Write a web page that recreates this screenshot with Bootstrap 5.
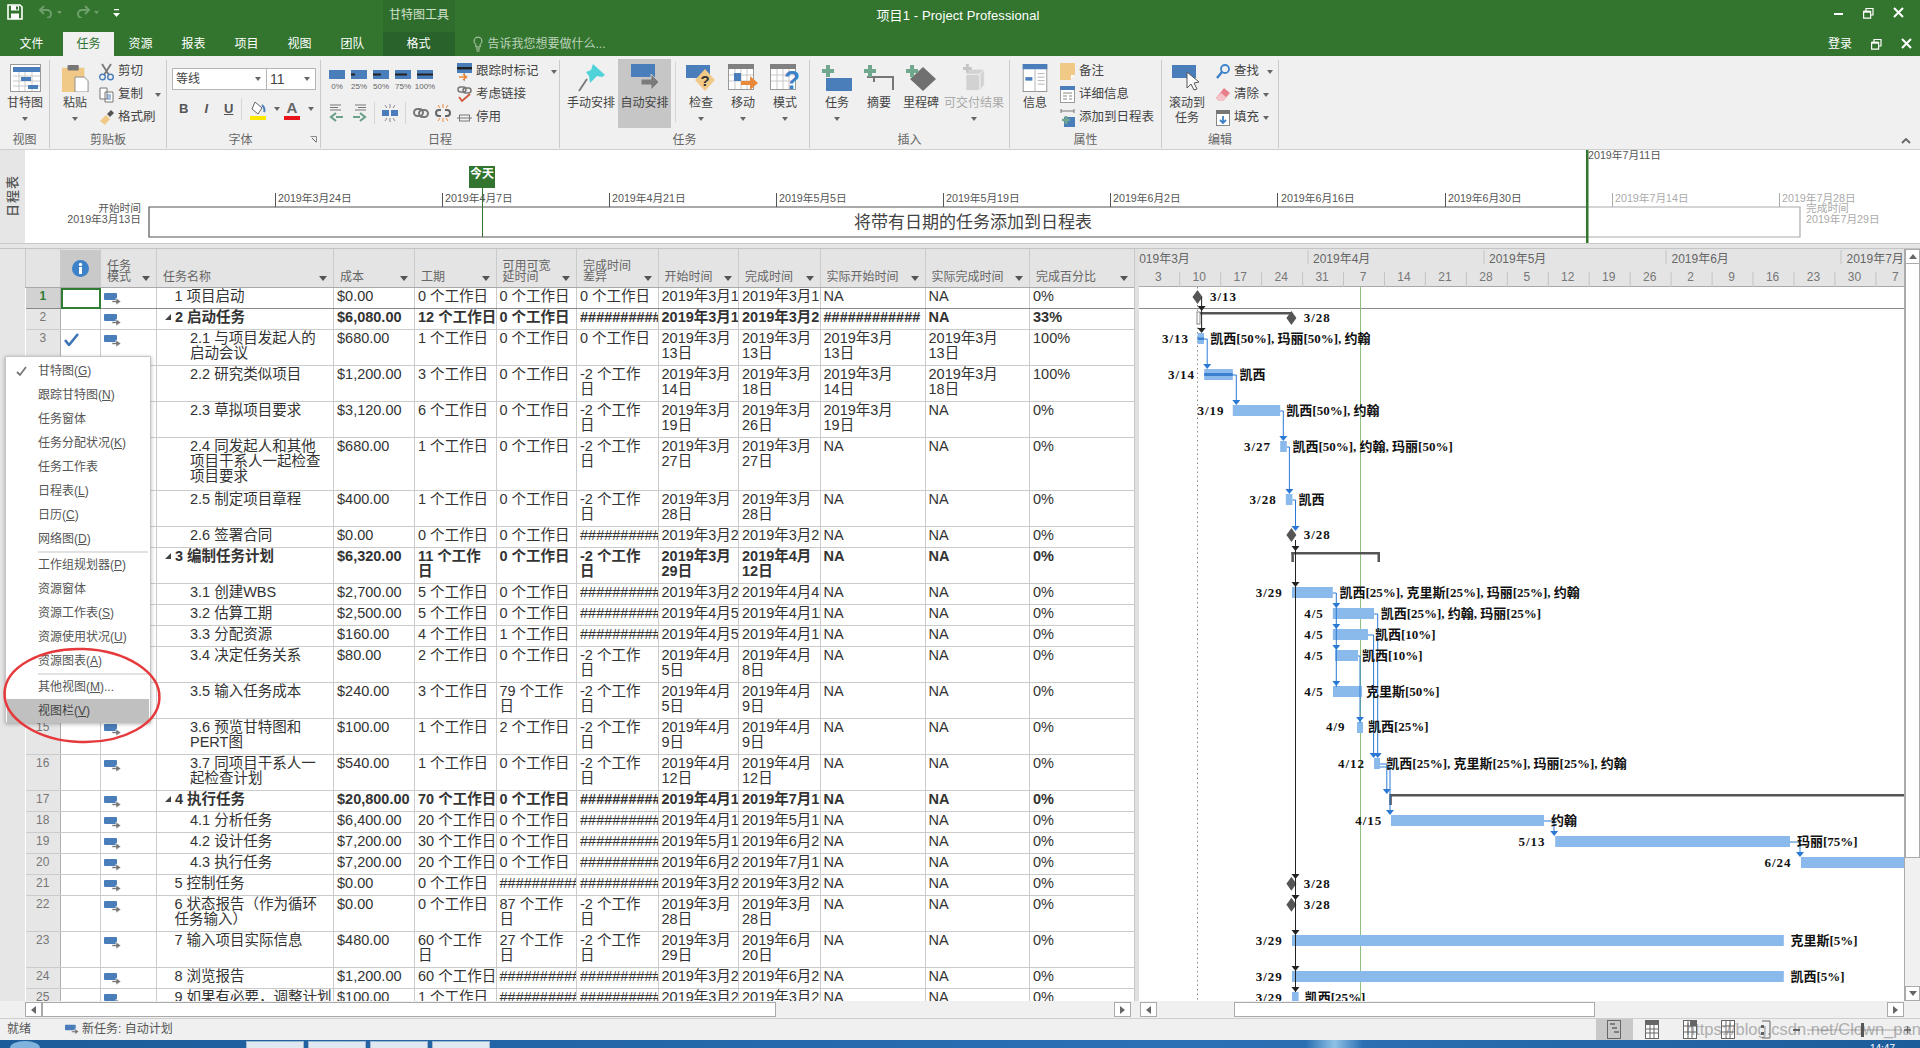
<!DOCTYPE html>
<html lang="zh-CN">
<head>
<meta charset="utf-8">
<title>项目1 - Project Professional</title>
<link href="https://cdn.jsdelivr.net/npm/bootstrap@5.3.0/dist/css/bootstrap.min.css" rel="stylesheet">
<style>
html,body{height:1048px;overflow:hidden}
body{position:relative;width:1920px;background:#e6e6e6;font-family:"Liberation Sans","Noto Sans CJK SC",sans-serif;font-size:12px;color:#444}
svg{display:block;flex:none}
/* title */
.ttl{height:56px;background:#33752f;color:#fff}
.ttl-top{height:32px}
.ttl-bot{height:24px}
.qat{width:383px;padding:4px 0 0 7px;gap:14px}
.ctx-a{width:72px;background:#2f6d2c;color:#cfe0cd;text-align:center;line-height:30px}
.ctx-b{width:72px;background:#29622a;text-align:center;line-height:24px}
.ttl-name{width:1006px;text-align:center;font-size:13px;line-height:32px;letter-spacing:.1px}
.wctl{margin-left:auto;width:86px;padding-top:7px;gap:19px}
.rtab.nav-link{width:53px;padding:0;text-align:center;color:#fff;line-height:24px;font-size:12px}
.rtab.first{width:63px}
.rtab.wide{width:51px}
.rtab.active{background:#f0f0f0;color:#2f7330}
.rtab-gap{width:3.5px}
.tell{padding-left:18px;gap:5px;color:#bcd2ba;line-height:24px}
.acct{margin-left:auto;width:92px;gap:19px;line-height:24px;align-items:center}
/* ribbon */
.rbn{height:94px;background:#f0f0f0;border-bottom:1px solid #cfcfcf;padding-top:4px;position:relative}
.grp{height:88px;border-right:1px solid #cbcbcb;display:flex;flex-direction:column;flex:none;position:relative}
.g1{width:50px}.g2{width:117px}.g3{width:154px}.g4{width:239px}.g5{width:250px}.g6{width:200px}.g7{width:152px}.g8{width:117px}
.gb{height:72px;display:flex;flex:none}
.gl-t{line-height:16px;text-align:center;color:#666}
.big{display:flex;flex-direction:column;align-items:center;padding-top:4px;flex:none;white-space:nowrap;line-height:15px}
.big svg{margin-bottom:4px;height:28px}
.big.dim{color:#aaa}
.w42{width:42px}.w50{width:50px}.w53{width:53px}.w64{width:64px}
.ml2{margin-left:2px}.ml6{margin-left:6px}
.on{background:#c6c6c6;height:69px;margin-top:-1px;padding-top:5px}
.car{width:0;height:0;border:3px solid transparent;border-top:4px solid #666;border-bottom:0;display:inline-block;flex:none}
.big .car{margin-top:6px}
.stk{display:flex;flex-direction:column;flex:none}
.itm{height:23px;display:flex;align-items:center;gap:4px;white-space:nowrap;font-size:12.5px}
.ml-g2{margin-left:-1px}
.sep-v{width:1px;background:#d6d6d6;margin:2px 4px 10px 4px;flex:none}
.combo{height:22px;background:#fff;border:1px solid #b5b5b5;display:flex;align-items:center;justify-content:space-between;padding:0 5px 0 3px;font-size:12px}
.cf{width:95px;margin-left:5px}.cs{width:50px;margin-left:-1px}
.nsz{font-size:14px;line-height:1}
.fb{font-weight:700;font-family:"Liberation Sans",sans-serif;font-size:13px;color:#555}
.fsep{width:1px;height:22px;background:#d6d6d6;flex:none}
.ml4n{margin-left:-4px}
.dlg{margin-left:auto;margin-right:3px}
.clps{margin-left:auto;margin-right:9px;margin-top:78px}
.sch{width:131px}
.pr-row{padding:10px 0 0 8px;gap:6px}
.pr{width:16px;align-items:center}
.pr-l{font-size:8px;line-height:8px;color:#666;white-space:nowrap}
.sc-row2{padding-left:8px;margin-top:11px;align-items:center}
.m6{margin-left:6px}.m7{margin-left:7px}
.fsep2{width:1px;height:22px;background:#d6d6d6;flex:none;margin-left:7px}
.sch-s{padding-left:5px}
/* timeline */
.tln{height:94px;background:#fff;border-bottom:1px solid #c9c9c9}
.vstrip{width:25px;background:#e6e6e6;display:flex;align-items:center;justify-content:center}
.vstrip span{writing-mode:vertical-rl;text-orientation:sideways;transform:rotate(180deg);font-size:13px;letter-spacing:1px;color:#555;font-weight:500}
.tt{font-size:10.7px;fill:#555}.tg{font-size:10.7px;fill:#aaa}
.band{height:5px;background:#e6e6e6;border-bottom:1px solid #c4c4c4}
/* main */
.mainp{height:752px}
.side{width:25px;background:#e6e6e6;flex:none}
.gridp{width:1109px;height:752px;overflow:hidden;background:#fff;flex:none}
.split{width:5px;background:#e0e0e0;border-left:1px solid #c8c8c8;flex:none}
.ganttp{width:765px;height:752px;background:#fff;overflow:hidden;flex:none}
.vsb{width:16px;background:#f0f0f0;border-left:1px solid #aaa;flex:none;flex-direction:column}
.sb-btn{height:15px;background:#fff;border:1px solid #aaa;display:flex;align-items:center;justify-content:center;flex:none}
.vth{height:594px;background:#fff;border:1px solid #aaa;border-top:0;flex:none}
.up{width:0;height:0;border:4px solid transparent;border-bottom:5px solid #666;border-top:0}
.dn{width:0;height:0;border:4px solid transparent;border-top:5px solid #666;border-bottom:0}
.lf{width:0;height:0;border:4px solid transparent;border-right:5px solid #666;border-left:0}
.rt{width:0;height:0;border:4px solid transparent;border-left:5px solid #666;border-right:0}
table.tg-t{table-layout:fixed;width:1109px;border-collapse:collapse;font-size:14.5px;color:#333}
.table.tg-t{margin:0}
.table.tg-t>:not(caption)>*>*{padding:1px 3px 0;border:1px solid #cbcbcb;line-height:15px;vertical-align:top;white-space:nowrap;overflow:hidden;color:#333;box-shadow:none}
.table.tg-t>thead>tr>th{height:38px;background:#e4e4e4;font-size:12px;font-weight:400;color:#666;line-height:11.7px;padding:0 6px 3px;vertical-align:bottom;border-top:0;border-bottom:1px solid #a9a9a9;white-space:normal}
.table.tg-t>thead>tr>th.hi{background:#c9c9c9;padding:0;vertical-align:middle}
.hd{display:flex;align-items:flex-end;justify-content:space-between}
.hd .car{border-width:4px;border-top-width:5px;border-bottom-width:0;margin-bottom:3px;border-top-color:#555}
.c0{width:35px}.c1{width:40px}.c2{width:56px}.c3{width:177px}.c4{width:81px}.c5{width:81.5px}.c6{width:80.5px}.c7{width:81.5px}.c8{width:80.5px}.c9{width:81.5px}.c10{width:105px}.c11{width:104.5px}.c12{width:105px}
.rh1 td{height:21px}.rh2 td{height:36px}.rh3 td{height:53px}
.table.tg-t td.rid{background:#e6e6e6;text-align:center;font-size:12px;color:#777;border-left:0;border-right:1px solid #b0b0b0}
.table.tg-t td.sel-id{background:#d2d2d2;color:#2e7d32;font-weight:700;border-bottom-color:#8a8a8a}
.table.tg-t td.sel{outline:2px solid #2e7d32;outline-offset:-2px}
.table.tg-t td.mo{padding:5px 0 0 3px}
.table.tg-t td.ck{padding:3px 0 0 3px}
.dark-b td{border-bottom-color:#8a8a8a!important}
.table.tg-t td.n0{padding-left:17.5px}
.table.tg-t td.n1{padding-left:33px}
.table.tg-t td.nt{padding-left:8px}
.fold{display:inline-block;width:0;height:0;border-style:solid;border-width:0 0 6px 6px;border-color:transparent transparent #444 transparent;margin-right:4px;vertical-align:2px}
.bld td{font-weight:700}
.gb-t{font:700 13px "Liberation Serif","Noto Sans CJK SC",serif;fill:#111}
.gd{letter-spacing:1px}
.gm{font-size:12px;fill:#666}.gw{font-size:12px;fill:#777;text-anchor:middle}
/* scrollbars */
.hsb{height:17px;background:#f0f0f0;padding-top:1px}
.hs-l{width:25px;flex:none}
.hs-btn{width:17px;height:15px;background:#fff;border:1px solid #aaa;display:flex;align-items:center;justify-content:center;flex:none}
.hs-th{height:15px;background:#fff;border:1px solid #aaa;flex:none}
.t1{width:734px}.t2{width:361px;margin-left:77px}
.hs-sp{flex:none}
.s1{width:338px}.s2{width:292px}.s3{width:9px}
/* status */
.stb{height:22px;background:#f0f0f0;border-top:1px solid #cfcfcf;color:#555;position:relative}
.stb-a{padding-left:7px;width:65px;line-height:21px}
.stb-b{gap:3px;line-height:21px;align-items:center}
.stb-r{margin-left:auto;align-items:center;height:21px;width:324.5px;flex:none}
.vb-on{width:37px;height:21px;background:#c8c8c8;display:flex;align-items:center;justify-content:center;flex:none}
.vb{width:38px;display:flex;align-items:center;justify-content:center;flex:none}
.wm{position:absolute;left:1686px;top:0;font-size:16.5px;line-height:21px;color:#555;opacity:.42;white-space:nowrap}
/* taskbar */
.tbar{height:8px;background:linear-gradient(90deg,#1d5c9a,#2a70b5 60%,#2a6fb2 68%,#8fc1e6 69.5%,#2a6fb2 71%,#1d5c9a);position:relative;overflow:hidden}
.orb{width:30px;height:14px;border-radius:50%;background:#7fb2dc;margin:1px 0 0 10px;flex:none}
.tbtn{width:58px;height:8px;background:#dfe9f2;border:1px solid #9fb8cf;border-bottom:0;flex:none;margin-top:1px}
.tb-g{margin-left:206px;gap:4px}
.clk{margin-left:auto;color:#fff;margin-right:25px;margin-top:3px;line-height:12px;font-size:10px}
/* view menu */
.dropdown-menu.vmenu{position:absolute;left:5px;top:356px;width:146px;min-width:0;height:367px;padding:2px 0 0;border:1px solid #c6c6c6;border-radius:0;background:#fff;box-shadow:0 1px 4px rgba(0,0,0,.3);margin:0;z-index:5;--bs-dropdown-link-color:#555}
.vmenu .dropdown-item{height:24px;padding:0 0 0 32px;font-size:12px;line-height:24px;color:#555;display:flex;align-items:center;width:144px}
.vmenu .dropdown-item.chk{padding-left:9px}
.vmenu .dropdown-item.chk svg{margin-right:10px}
.vmenu .dropdown-item.hot{background:#c0c0c0;color:#444;margin-left:1px;width:142px;padding-left:31px}
.vmenu .dropdown-divider{margin:0 2px 0 32px;height:2px;border:0;background:#e2e2e2;opacity:1}
.ring{position:absolute;left:0;top:645px;z-index:6}
</style>
</head>
<body class="d-flex flex-column">
<svg width="0" height="0" class="position-absolute">
<defs>
<symbol id="auto" viewBox="0 0 17 12"><rect x="0" y="0" width="13" height="7" rx="1" fill="#4a7ebb"/><path d="M8 7.5h4V5l5 3.5-5 3.500V9.500H8z" fill="#777" stroke="#fff" stroke-width=".6"/></symbol>
<path id="ah" d="M-4 0h8l-4 5z"/>
<path id="dm" d="M0-7 5 0 0 7-5 0z"/>
</defs>
</svg>

<header class="ttl flex-none">
  <div class="ttl-top d-flex">
    <div class="qat d-flex">
      <svg width="16" height="16" viewBox="0 0 16 16"><path d="M1 1h12l2 2v12H1z" fill="none" stroke="#fff" stroke-width="1.600"/><path d="M4 1.500h8v5H4zM4 9.500h8V15H4z" fill="#fff"/><rect x="9" y="2.500" width="2" height="3" fill="#33752f"/></svg>
      <svg width="24" height="14" viewBox="0 0 24 14"><path d="M7 2 3 6l4 4M3 6h7a4 4 0 0 1 0 8" fill="none" stroke="#6f9f6c" stroke-width="2"/><path d="M20 7h5l-2.500 3z" fill="#6f9f6c"/></svg>
      <svg width="24" height="14" viewBox="0 0 24 14"><path d="M10 2l4 4-4 4M14 6H7a4 4 0 0 0 0 8" fill="none" stroke="#6f9f6c" stroke-width="2"/><path d="M19 7h5l-2.500 3z" fill="#6f9f6c"/></svg>
      <svg width="7" height="10" viewBox="0 0 7 10" class="mt-1"><path d="M1 1h5v1.200H1zM0 5h7L3.500 9z" fill="#fff"/></svg>
    </div>
    <div class="ctx-a">甘特图工具</div>
    <div class="ttl-name">项目1 - Project Professional</div>
    <div class="wctl d-flex">
      <svg width="10" height="12" viewBox="0 0 10 12"><rect y="6" width="9" height="2" fill="#fff"/></svg>
      <svg width="11" height="12" viewBox="0 0 11 12"><path d="M.6 4.600h7v6.500h-7zM3 4V1.500h7V8H8" fill="none" stroke="#fff" stroke-width="1.200"/><path d="M.6 4.600h7" stroke="#fff" stroke-width="2"/></svg>
      <svg width="11" height="12" viewBox="0 0 11 12"><path d="M1 1l9 9M10 1l-9 9" stroke="#fff" stroke-width="2"/></svg>
    </div>
  </div>
  <div class="ttl-bot d-flex">
    <ul class="nav flex-nowrap">
      <li class="nav-item"><a class="nav-link rtab first" href="#">文件</a></li>
      <li class="nav-item"><a class="nav-link rtab wide active" href="#">任务</a></li>
      <li class="nav-item"><a class="nav-link rtab" href="#">资源</a></li>
      <li class="nav-item"><a class="nav-link rtab" href="#">报表</a></li>
      <li class="nav-item"><a class="nav-link rtab" href="#">项目</a></li>
      <li class="nav-item"><a class="nav-link rtab" href="#">视图</a></li>
      <li class="nav-item"><a class="nav-link rtab" href="#">团队</a></li>
    </ul>
    <div class="rtab-gap"></div>
    <div class="ctx-b">格式</div>
    <div class="tell d-flex align-items-center">
      <svg width="10" height="16" viewBox="0 0 10 16"><path d="M5 1a4 4 0 0 0-2.200 7.300V11h4.400V8.300A4 4 0 0 0 5 1zM3 13h4M3.500 15h3" fill="none" stroke="#bcd2ba" stroke-width="1"/></svg>
      <span>告诉我您想要做什么...</span>
    </div>
    <div class="acct d-flex">
      <span>登录</span>
      <svg width="11" height="12" viewBox="0 0 11 12"><path d="M.6 4.600h7v6.500h-7zM3 4V1.500h7V8H8" fill="none" stroke="#fff" stroke-width="1.200"/><path d="M.6 4.600h7" stroke="#fff" stroke-width="2"/></svg>
      <svg width="11" height="12" viewBox="0 0 11 12"><path d="M1 1l9 9M10 1l-9 9" stroke="#fff" stroke-width="2"/></svg>
    </div>
  </div>
</header>

<section class="rbn d-flex">
  <div class="grp g1"><div class="gb">
    <div class="big w50"><svg width="31" height="28" viewBox="0 0 31 28"><rect x=".5" y=".5" width="30" height="27" fill="#fff" stroke="#999"/><rect x="3" y="3" width="27" height="5" fill="#4a7ebb"/><path d="M9 8v19M3 12h27M3 17h27M3 22h27M15 8v19M22 8v19" stroke="#c9c9c9"/><rect x="11" y="13" width="10" height="4" fill="#4a7ebb"/><rect x="18" y="21" width="10" height="4" fill="#4a7ebb"/></svg><span>甘特图</span><i class="car"></i></div>
  </div><div class="gl-t">视图</div></div>

  <div class="grp g2"><div class="gb">
    <div class="big w50"><svg width="30" height="30" viewBox="0 0 30 30"><rect x="1" y="4" width="24" height="26" fill="#f1c987"/><rect x="7" y="1" width="12" height="6" rx="1" fill="#777"/><path d="M15 14h10l4 4v12H15z" fill="#fff" stroke="#888"/></svg><span>粘贴</span><i class="car"></i></div>
    <div class="stk ml-g2">
      <div class="itm"><svg width="15" height="18" viewBox="0 0 15 18"><path d="M3 1l7 11M12 1L5 12" stroke="#777" stroke-width="1.800"/><circle cx="3.500" cy="14" r="2.800" fill="none" stroke="#4a7ebb" stroke-width="1.400"/><circle cx="11.500" cy="14" r="2.800" fill="none" stroke="#4a7ebb" stroke-width="1.400"/></svg><span>剪切</span></div>
      <div class="itm"><svg width="15" height="16" viewBox="0 0 15 16"><path d="M1 1h7l0 11H1zM6 5h8v10H6z" fill="#fff" stroke="#777"/><path d="M8 8h4M8 10h4M8 12h4" stroke="#4a7ebb"/></svg><span>复制</span><i class="car ms-2"></i></div>
      <div class="itm"><svg width="15" height="17" viewBox="0 0 15 17"><path d="M1 12l6-6 4 4-5 6z" fill="#f1c987"/><path d="M8 5l4-4 3 3-4 4z" fill="#555"/></svg><span>格式刷</span></div>
    </div>
  </div><div class="gl-t">剪贴板</div></div>

  <div class="grp g3"><div class="gb flex-column">
    <div class="d-flex pt-1 mt-1"><div class="combo cf"><span>等线</span><i class="car"></i></div><div class="combo cs"><span class="nsz">11</span><i class="car"></i></div></div>
    <div class="d-flex align-items-center mt-2 ps-2 gap-2">
      <span class="fb ms-1">B</span><em class="fb ms-2">I</em><u class="fb ms-2">U</u>
      <span class="fsep"></span>
      <svg width="16" height="21" viewBox="0 0 16 21"><path d="M5 3l7 6-4 6-6-5z" fill="#fff" stroke="#666"/><path d="M12 6c2 2 3 5 2 7" stroke="#4a7ebb" stroke-width="2" fill="none"/><rect y="17" width="16" height="4" fill="#ffe800"/></svg><i class="car"></i>
      <svg class="ml4n" width="16" height="21" viewBox="0 0 16 21"><text x="8" y="14" text-anchor="middle" font-size="15" font-weight="700" fill="#666" font-family="Liberation Sans">A</text><rect y="17" width="16" height="4" fill="#e8141c"/></svg><i class="car"></i>
    </div>
  </div><div class="d-flex"><div class="gl-t flex-grow-1 ps-1">字体</div><svg class="dlg mt-1" width="7" height="7" viewBox="0 0 7 7"><path d="M.5.5h6v6" fill="none" stroke="#888"/><path d="M2 2l4 4" stroke="#666"/></svg></div></div>

  <div class="grp g4"><div class="gb">
    <div class="d-flex flex-column sch">
      <div class="d-flex pr-row">
        <div class="stk pr"><svg width="16" height="9" viewBox="0 0 16 9"><rect width="16" height="9" fill="#4a7ebb"/></svg><span class="pr-l mt-1">0%</span></div>
        <div class="stk pr"><svg width="16" height="9" viewBox="0 0 16 9"><rect width="16" height="9" fill="#4a7ebb"/><rect y="3.500" width="4" height="2" fill="#222"/></svg><span class="pr-l mt-1">25%</span></div>
        <div class="stk pr"><svg width="16" height="9" viewBox="0 0 16 9"><rect width="16" height="9" fill="#4a7ebb"/><rect y="3.500" width="8" height="2" fill="#222"/></svg><span class="pr-l mt-1">50%</span></div>
        <div class="stk pr"><svg width="16" height="9" viewBox="0 0 16 9"><rect width="16" height="9" fill="#4a7ebb"/><rect y="3.500" width="12" height="2" fill="#222"/></svg><span class="pr-l mt-1">75%</span></div>
        <div class="stk pr"><svg width="16" height="9" viewBox="0 0 16 9"><rect width="16" height="9" fill="#4a7ebb"/><rect y="3.500" width="16" height="2" fill="#222"/></svg><span class="pr-l mt-1">100%</span></div>
      </div>
      <div class="d-flex sc-row2">
        <svg width="16" height="18" viewBox="0 0 16 18"><path d="M1 1h11M1 3.500h8M1 6h11" stroke="#777"/><path d="M7 13H14M7 9l-5 4 5 4" fill="none" stroke="#69a088" stroke-width="2.200"/></svg>
        <svg class="m6" width="16" height="18" viewBox="0 0 16 18"><path d="M4 1h11M7 3.500h8M4 6h11" stroke="#777"/><path d="M9 13H2M9 9l5 4-5 4" fill="none" stroke="#69a088" stroke-width="2.200"/></svg>
        <span class="fsep2"></span>
        <svg class="m7" width="16" height="18" viewBox="0 0 16 18"><rect y="6" width="7" height="6" fill="#4a7ebb"/><rect x="9" y="6" width="7" height="6" fill="#4a7ebb"/><path d="M8 0v4M8 14v4M3 1l2 3M13 1l-2 3M3 17l2-3M13 17l-2-3" stroke="#888"/></svg>
        <span class="fsep2"></span>
        <svg class="m7" width="16" height="12" viewBox="0 0 16 12"><rect x="1" y="2" width="9" height="7" rx="3.500" fill="none" stroke="#777" stroke-width="2"/><rect x="6" y="3" width="9" height="7" rx="3.500" fill="none" stroke="#777" stroke-width="2"/></svg>
        <svg class="m6" width="16" height="18" viewBox="0 0 16 18"><path d="M6 6H4a3 3 0 0 0 0 6h2M10 6h2a3 3 0 0 1 0 6h-2" fill="none" stroke="#666" stroke-width="2"/><path d="M8 0v4M8 14v4M3 1l2 3M13 1l-2 3M3 17l2-3M13 17l-2-3" stroke="#e8893a"/></svg>
      </div>
    </div>
    <div class="stk sch-s">
      <div class="itm"><svg width="15" height="18" viewBox="0 0 15 18"><rect width="15" height="10" fill="#4a7ebb"/><rect y="4" width="15" height="2.400" fill="#222"/><path d="M7.500 10v8" stroke="#999"/><path d="M2 14h7M6 11l3.500 3L6 17" fill="none" stroke="#e8893a" stroke-width="1.600"/></svg><span>跟踪时标记</span><i class="car ms-2"></i></div>
      <div class="itm"><svg width="15" height="17" viewBox="0 0 15 17"><rect x="1" y="1" width="8" height="5" rx="2.500" fill="none" stroke="#777" stroke-width="1.500"/><rect x="6" y="2" width="8" height="5" rx="2.500" fill="none" stroke="#777" stroke-width="1.500"/><path d="M2 11l3 4 8-7" fill="none" stroke="#d2553a" stroke-width="1.800"/></svg><span>考虑链接</span></div>
      <div class="itm"><svg width="15" height="10" viewBox="0 0 15 10"><path d="M0 5h15" stroke="#777"/><rect x="2.500" y="2" width="10" height="6" fill="none" stroke="#777"/></svg><span>停用</span></div>
    </div>
  </div><div class="gl-t">日程</div></div>

  <div class="grp g5"><div class="gb">
    <div class="big w50 ml6"><svg width="28" height="28" viewBox="0 0 28 28"><path d="M16 0l12 11-3 2-5-1-7 7-1-7-3-4 5-2z" fill="#4fd3d8"/><path d="M10 15L2 27" stroke="#777" stroke-width="1.800"/></svg><span>手动安排</span></div>
    <div class="big w53 on ml2"><svg width="28" height="28" viewBox="0 0 28 28"><rect width="24" height="13" fill="#4a7ebb"/><path d="M10 15h10v-5l8 8-8 8v-5H10z" fill="#7b7b7b" stroke="#c6c6c6"/></svg><span>自动安排</span></div>
    <span class="sep-v"></span>
    <div class="big w42"><svg width="30" height="28" viewBox="0 0 30 28"><rect x="0" y="1" width="24" height="13" fill="#4a7ebb"/><path d="M19 5l10 11-10 11-10-11z" fill="#f1c987"/><text x="19" y="22" text-anchor="middle" font-size="15" font-weight="700" fill="#333" font-family="Liberation Sans">?</text></svg><span>检查</span><i class="car"></i></div>
    <div class="big w42"><svg width="30" height="28" viewBox="0 0 30 28"><rect x=".5" y=".5" width="25" height="25" fill="#fff" stroke="#999"/><rect y="0" width="26" height="5" fill="#808080"/><path d="M7 5v20M13 5v20M19 5v20M1 11h24M1 17h24" stroke="#c9c9c9"/><rect x="6" y="9" width="7" height="8" fill="#4a7ebb"/><path d="M13 17h9v-5l8 7-8 7v-5h-9z" fill="#e8893a"/></svg><span>移动</span><i class="car"></i></div>
    <div class="big w42"><svg width="30" height="28" viewBox="0 0 30 28"><rect x=".5" y=".5" width="25" height="25" fill="#fff" stroke="#999"/><rect y="0" width="26" height="5" fill="#808080"/><path d="M7 5v20M13 5v20M19 5v20M1 11h24M1 17h24" stroke="#c9c9c9"/><text x="22" y="25" text-anchor="middle" font-size="26" font-weight="700" fill="#3d82c8" font-family="Liberation Sans">?</text></svg><span>模式</span><i class="car"></i></div>
  </div><div class="gl-t">任务</div></div>

  <div class="grp g6"><div class="gb">
    <div class="big w42 ml6"><svg width="30" height="28" viewBox="0 0 30 28"><path d="M4 14h26v13H4z" fill="#4a7ebb"/><path d="M0 7h12M6 1v12" stroke="#6fa78f" stroke-width="4"/></svg><span>任务</span><i class="car"></i></div>
    <div class="big w42"><svg width="30" height="28" viewBox="0 0 30 28"><path d="M3 13h26v13" fill="none" stroke="#777" stroke-width="2"/><path d="M10 13v5" stroke="#777" stroke-width="2"/><path d="M0 7h12M6 1v12" stroke="#6fa78f" stroke-width="4"/></svg><span>摘要</span></div>
    <div class="big w42"><svg width="30" height="28" viewBox="0 0 30 28"><path d="M17 3l13 12-13 12L4 15z" fill="#707070"/><path d="M0 7h12M6 1v12" stroke="#6fa78f" stroke-width="4"/></svg><span>里程碑</span></div>
    <div class="big dim w64"><svg width="30" height="28" viewBox="0 0 30 38"><path d="M4 14h19v22H4zM23 14l6-7v21l-6 8zM4 14l6-7h19l-6 7z" fill="#d2d2d2" stroke="#f0f0f0"/><path d="M0 6h12M6 0v12" stroke="#c5c5c5" stroke-width="4"/></svg><span>可交付结果</span><i class="car"></i></div>
  </div><div class="gl-t">插入</div></div>

  <div class="grp g7"><div class="gb">
    <div class="big w50"><svg width="28" height="32" viewBox="0 0 28 32"><rect x=".5" y=".5" width="27" height="31" fill="#fff" stroke="#888"/><rect width="28" height="6" fill="#4a7ebb"/><rect x="3" y="15" width="8" height="4" fill="#4a7ebb"/><path d="M14 6v26M17 11h8M17 15h8M17 19h8M17 23h8" stroke="#aaa"/></svg><span>信息</span></div>
    <div class="stk">
      <div class="itm"><svg width="15" height="17" viewBox="0 0 15 17"><path d="M0 0h15v12l-4 5H0z" fill="#f1c987"/><path d="M11 17v-5h4" fill="#fff"/></svg><span>备注</span></div>
      <div class="itm"><svg width="15" height="17" viewBox="0 0 15 17"><rect x=".5" y=".5" width="14" height="16" fill="#fff" stroke="#999"/><rect width="15" height="4" fill="#4a7ebb"/><path d="M3 7h9M3 10h4M9 10h3M3 13h4M9 13h3" stroke="#888"/></svg><span>详细信息</span></div>
      <div class="itm"><svg width="15" height="18" viewBox="0 0 15 18"><path d="M1 2h13M1 0v4M14 0v4" stroke="#777"/><rect x="4" y="8" width="11" height="10" fill="#4a7ebb"/><path d="M2 11h8M6 7v8" stroke="#6fa78f" stroke-width="2.600"/></svg><span>添加到日程表</span></div>
    </div>
  </div><div class="gl-t">属性</div></div>

  <div class="grp g8"><div class="gb">
    <div class="big w50"><svg width="30" height="28" viewBox="0 0 30 28"><rect y="1" width="24" height="13" fill="#4a7ebb"/><path d="M15 8v16l4-4 3 6 3-1-3-6 5-1z" fill="#fff" stroke="#555"/></svg><span>滚动到</span><span>任务</span></div>
    <div class="stk ms-1">
      <div class="itm"><svg width="14" height="15" viewBox="0 0 14 15"><circle cx="9" cy="5" r="4" fill="none" stroke="#3d82c8" stroke-width="1.800"/><path d="M6 8l-5 6" stroke="#3d82c8" stroke-width="2.400"/></svg><span>查找</span><i class="car ms-1"></i></div>
      <div class="itm"><svg width="14" height="15" viewBox="0 0 14 15"><path d="M8 1l6 5-7 8H3L0 11z" fill="#e8808c"/><path d="M0 11l3 3h4l3-4-5-4z" fill="#f5c4c8"/></svg><span>清除</span><i class="car"></i></div>
      <div class="itm"><svg width="14" height="16" viewBox="0 0 14 16"><rect x=".5" y=".5" width="13" height="15" fill="#fff" stroke="#888"/><rect width="14" height="4" fill="#777"/><path d="M7 6v7M4 10l3 3 3-3" fill="none" stroke="#3d82c8" stroke-width="1.800"/></svg><span>填充</span><i class="car"></i></div>
    </div>
  </div><div class="gl-t">编辑</div></div>
  <svg class="clps" width="10" height="6" viewBox="0 0 10 6"><path d="M1 5l4-4 4 4" fill="none" stroke="#666" stroke-width="1.800"/></svg>
</section>

<section class="tln d-flex">
  <div class="vstrip"><span>日程表</span></div>
  <svg width="1895" height="93" viewBox="25 150 1895 93">
    <path d="M1587 207H149v30h1438" fill="none" stroke="#555" stroke-width="1.200"/>
    <path d="M1587 207h213v30h-213" fill="none" stroke="#aaa" stroke-width="1.200"/>
    <path d="M275.500 193v14M442.500 193v14M609.500 193v14M776.500 193v14M943.500 193v14M1110.500 193v14M1277.500 193v14M1445.500 193v14" stroke="#555"/>
    <path d="M1612.500 193v14M1779.500 193v14" stroke="#aaa"/>
    <text class="tt" x="278" y="202">2019年3月24日</text><text class="tt" x="445" y="202">2019年4月7日</text><text class="tt" x="612" y="202">2019年4月21日</text><text class="tt" x="779" y="202">2019年5月5日</text><text class="tt" x="946" y="202">2019年5月19日</text><text class="tt" x="1113" y="202">2019年6月2日</text><text class="tt" x="1281" y="202">2019年6月16日</text><text class="tt" x="1448" y="202">2019年6月30日</text>
    <text class="tg" x="1615" y="202">2019年7月14日</text><text class="tg" x="1782" y="202">2019年7月28日</text>
    <text class="tt" x="141" y="212" text-anchor="end">开始时间</text><text class="tt" x="141" y="223" text-anchor="end">2019年3月13日</text>
    <text class="tg" x="1806" y="212">完成时间</text><text class="tg" x="1806" y="223">2019年7月29日</text>
    <text x="973" y="228" text-anchor="middle" font-size="17" fill="#444">将带有日期的任务添加到日程表</text>
    <rect x="469" y="166" width="26" height="22" fill="#33752f"/><text x="482" y="178" text-anchor="middle" font-size="12" font-weight="700" fill="#fff">今天</text>
    <path d="M482.500 188v49" stroke="#33752f"/>
    <rect x="1586" y="150" width="2.500" height="94" fill="#33752f"/>
    <text class="tt" x="1588" y="159">2019年7月11日</text>
  </svg>
</section>
<div class="band"></div>

<main class="mainp d-flex">
  <div class="side"></div>
  <div class="gridp">
    <table class="table table-bordered tg-t">
      <colgroup><col class="c0"><col class="c1"><col class="c2"><col class="c3"><col class="c4"><col class="c5"><col class="c6"><col class="c7"><col class="c8"><col class="c9"><col class="c10"><col class="c11"><col class="c12"></colgroup>
      <thead><tr>
        <th></th>
        <th class="hi"><svg class="mx-auto" width="17" height="17" viewBox="0 0 17 17"><circle cx="8.500" cy="8.500" r="8.500" fill="#3d82c8"/><rect x="7" y="7" width="3" height="7" fill="#fff"/><circle cx="8.500" cy="4.500" r="1.700" fill="#fff"/></svg></th>
        <th><div class="hd"><span>任务<br>模式</span><i class="car"></i></div></th>
        <th><div class="hd"><span>任务名称</span><i class="car"></i></div></th>
        <th><div class="hd"><span>成本</span><i class="car"></i></div></th>
        <th><div class="hd"><span>工期</span><i class="car"></i></div></th>
        <th><div class="hd"><span>可用可宽<br>延时间</span><i class="car"></i></div></th>
        <th><div class="hd"><span>完成时间<br>差异</span><i class="car"></i></div></th>
        <th><div class="hd"><span>开始时间</span><i class="car"></i></div></th>
        <th><div class="hd"><span>完成时间</span><i class="car"></i></div></th>
        <th><div class="hd"><span>实际开始时间</span><i class="car"></i></div></th>
        <th><div class="hd"><span>实际完成时间</span><i class="car"></i></div></th>
        <th><div class="hd"><span>完成百分比</span><i class="car"></i></div></th>
      </tr></thead>
      <tbody>
<tr class="rh1 dark-b"><td class="rid sel-id">1</td><td class="sel"></td><td class="mo"><svg width="17" height="12"><use href="#auto"/></svg></td><td class="n0">1 项目启动</td><td>$0.00</td><td>0 个工作日</td><td>0 个工作日</td><td>0 个工作日</td><td>2019年3月13日</td><td>2019年3月13日</td><td>NA</td><td>NA</td><td>0%</td></tr>
<tr class="rh1 bld"><td class="rid fw-normal">2</td><td></td><td class="mo"><svg width="17" height="12"><use href="#auto"/></svg></td><td class="nt"><i class="fold"></i>2 启动任务</td><td>$6,080.00</td><td>12 个工作日</td><td>0 个工作日</td><td>##########</td><td>2019年3月13日</td><td>2019年3月28日</td><td>############</td><td>NA</td><td>33%</td></tr>
<tr class="rh2"><td class="rid">3</td><td class="ck"><svg width="15" height="13" viewBox="0 0 15 13"><path d="M1 7l4 5L14 1" fill="none" stroke="#3f74b5" stroke-width="2.600"/></svg></td><td class="mo"><svg width="17" height="12"><use href="#auto"/></svg></td><td class="n1">2.1 与项目发起人的<br>启动会议</td><td>$680.00</td><td>1 个工作日</td><td>0 个工作日</td><td>0 个工作日</td><td>2019年3月<br>13日</td><td>2019年3月<br>13日</td><td>2019年3月<br>13日</td><td>2019年3月<br>13日</td><td>100%</td></tr>
<tr class="rh2"><td class="rid">4</td><td></td><td class="mo"><svg width="17" height="12"><use href="#auto"/></svg></td><td class="n1">2.2 研究类似项目</td><td>$1,200.00</td><td>3 个工作日</td><td>0 个工作日</td><td>-2 个工作<br>日</td><td>2019年3月<br>14日</td><td>2019年3月<br>18日</td><td>2019年3月<br>14日</td><td>2019年3月<br>18日</td><td>100%</td></tr>
<tr class="rh2"><td class="rid">5</td><td></td><td class="mo"><svg width="17" height="12"><use href="#auto"/></svg></td><td class="n1">2.3 草拟项目要求</td><td>$3,120.00</td><td>6 个工作日</td><td>0 个工作日</td><td>-2 个工作<br>日</td><td>2019年3月<br>19日</td><td>2019年3月<br>26日</td><td>2019年3月<br>19日</td><td>NA</td><td>0%</td></tr>
<tr class="rh3"><td class="rid">6</td><td></td><td class="mo"><svg width="17" height="12"><use href="#auto"/></svg></td><td class="n1">2.4 同发起人和其他<br>项目干系人一起检查<br>项目要求</td><td>$680.00</td><td>1 个工作日</td><td>0 个工作日</td><td>-2 个工作<br>日</td><td>2019年3月<br>27日</td><td>2019年3月<br>27日</td><td>NA</td><td>NA</td><td>0%</td></tr>
<tr class="rh2"><td class="rid">7</td><td></td><td class="mo"><svg width="17" height="12"><use href="#auto"/></svg></td><td class="n1">2.5 制定项目章程</td><td>$400.00</td><td>1 个工作日</td><td>0 个工作日</td><td>-2 个工作<br>日</td><td>2019年3月<br>28日</td><td>2019年3月<br>28日</td><td>NA</td><td>NA</td><td>0%</td></tr>
<tr class="rh1"><td class="rid">8</td><td></td><td class="mo"><svg width="17" height="12"><use href="#auto"/></svg></td><td class="n1">2.6 签署合同</td><td>$0.00</td><td>0 个工作日</td><td>0 个工作日</td><td>##########</td><td>2019年3月28日</td><td>2019年3月28日</td><td>NA</td><td>NA</td><td>0%</td></tr>
<tr class="rh2 bld"><td class="rid fw-normal">9</td><td></td><td class="mo"><svg width="17" height="12"><use href="#auto"/></svg></td><td class="nt"><i class="fold"></i>3 编制任务计划</td><td>$6,320.00</td><td>11 个工作<br>日</td><td>0 个工作日</td><td>-2 个工作<br>日</td><td>2019年3月<br>29日</td><td>2019年4月<br>12日</td><td>NA</td><td>NA</td><td>0%</td></tr>
<tr class="rh1"><td class="rid">10</td><td></td><td class="mo"><svg width="17" height="12"><use href="#auto"/></svg></td><td class="n1">3.1 创建WBS</td><td>$2,700.00</td><td>5 个工作日</td><td>0 个工作日</td><td>##########</td><td>2019年3月29日</td><td>2019年4月4日</td><td>NA</td><td>NA</td><td>0%</td></tr>
<tr class="rh1"><td class="rid">11</td><td></td><td class="mo"><svg width="17" height="12"><use href="#auto"/></svg></td><td class="n1">3.2 估算工期</td><td>$2,500.00</td><td>5 个工作日</td><td>0 个工作日</td><td>##########</td><td>2019年4月5日</td><td>2019年4月11日</td><td>NA</td><td>NA</td><td>0%</td></tr>
<tr class="rh1"><td class="rid">12</td><td></td><td class="mo"><svg width="17" height="12"><use href="#auto"/></svg></td><td class="n1">3.3 分配资源</td><td>$160.00</td><td>4 个工作日</td><td>1 个工作日</td><td>##########</td><td>2019年4月5日</td><td>2019年4月10日</td><td>NA</td><td>NA</td><td>0%</td></tr>
<tr class="rh2"><td class="rid">13</td><td></td><td class="mo"><svg width="17" height="12"><use href="#auto"/></svg></td><td class="n1">3.4 决定任务关系</td><td>$80.00</td><td>2 个工作日</td><td>0 个工作日</td><td>-2 个工作<br>日</td><td>2019年4月<br>5日</td><td>2019年4月<br>8日</td><td>NA</td><td>NA</td><td>0%</td></tr>
<tr class="rh2"><td class="rid">14</td><td></td><td class="mo"><svg width="17" height="12"><use href="#auto"/></svg></td><td class="n1">3.5 输入任务成本</td><td>$240.00</td><td>3 个工作日</td><td>79 个工作<br>日</td><td>-2 个工作<br>日</td><td>2019年4月<br>5日</td><td>2019年4月<br>9日</td><td>NA</td><td>NA</td><td>0%</td></tr>
<tr class="rh2"><td class="rid">15</td><td></td><td class="mo"><svg width="17" height="12"><use href="#auto"/></svg></td><td class="n1">3.6 预览甘特图和<br>PERT图</td><td>$100.00</td><td>1 个工作日</td><td>2 个工作日</td><td>-2 个工作<br>日</td><td>2019年4月<br>9日</td><td>2019年4月<br>9日</td><td>NA</td><td>NA</td><td>0%</td></tr>
<tr class="rh2"><td class="rid">16</td><td></td><td class="mo"><svg width="17" height="12"><use href="#auto"/></svg></td><td class="n1">3.7 同项目干系人一<br>起检查计划</td><td>$540.00</td><td>1 个工作日</td><td>0 个工作日</td><td>-2 个工作<br>日</td><td>2019年4月<br>12日</td><td>2019年4月<br>12日</td><td>NA</td><td>NA</td><td>0%</td></tr>
<tr class="rh1 bld"><td class="rid fw-normal">17</td><td></td><td class="mo"><svg width="17" height="12"><use href="#auto"/></svg></td><td class="nt"><i class="fold"></i>4 执行任务</td><td>$20,800.00</td><td>70 个工作日</td><td>0 个工作日</td><td>##########</td><td>2019年4月15日</td><td>2019年7月19日</td><td>NA</td><td>NA</td><td>0%</td></tr>
<tr class="rh1"><td class="rid">18</td><td></td><td class="mo"><svg width="17" height="12"><use href="#auto"/></svg></td><td class="n1">4.1 分析任务</td><td>$6,400.00</td><td>20 个工作日</td><td>0 个工作日</td><td>##########</td><td>2019年4月15日</td><td>2019年5月10日</td><td>NA</td><td>NA</td><td>0%</td></tr>
<tr class="rh1"><td class="rid">19</td><td></td><td class="mo"><svg width="17" height="12"><use href="#auto"/></svg></td><td class="n1">4.2 设计任务</td><td>$7,200.00</td><td>30 个工作日</td><td>0 个工作日</td><td>##########</td><td>2019年5月13日</td><td>2019年6月21日</td><td>NA</td><td>NA</td><td>0%</td></tr>
<tr class="rh1"><td class="rid">20</td><td></td><td class="mo"><svg width="17" height="12"><use href="#auto"/></svg></td><td class="n1">4.3 执行任务</td><td>$7,200.00</td><td>20 个工作日</td><td>0 个工作日</td><td>##########</td><td>2019年6月24日</td><td>2019年7月19日</td><td>NA</td><td>NA</td><td>0%</td></tr>
<tr class="rh1"><td class="rid">21</td><td></td><td class="mo"><svg width="17" height="12"><use href="#auto"/></svg></td><td class="n0">5 控制任务</td><td>$0.00</td><td>0 个工作日</td><td>##########</td><td>##########</td><td>2019年3月28日</td><td>2019年3月28日</td><td>NA</td><td>NA</td><td>0%</td></tr>
<tr class="rh2"><td class="rid">22</td><td></td><td class="mo"><svg width="17" height="12"><use href="#auto"/></svg></td><td class="n0">6 状态报告（作为循环<br>任务输入）</td><td>$0.00</td><td>0 个工作日</td><td>87 个工作<br>日</td><td>-2 个工作<br>日</td><td>2019年3月<br>28日</td><td>2019年3月<br>28日</td><td>NA</td><td>NA</td><td>0%</td></tr>
<tr class="rh2"><td class="rid">23</td><td></td><td class="mo"><svg width="17" height="12"><use href="#auto"/></svg></td><td class="n0">7 输入项目实际信息</td><td>$480.00</td><td>60 个工作<br>日</td><td>27 个工作<br>日</td><td>-2 个工作<br>日</td><td>2019年3月<br>29日</td><td>2019年6月<br>20日</td><td>NA</td><td>NA</td><td>0%</td></tr>
<tr class="rh1"><td class="rid">24</td><td></td><td class="mo"><svg width="17" height="12"><use href="#auto"/></svg></td><td class="n0">8 浏览报告</td><td>$1,200.00</td><td>60 个工作日</td><td>##########</td><td>##########</td><td>2019年3月29日</td><td>2019年6月20日</td><td>NA</td><td>NA</td><td>0%</td></tr>
<tr class="rh1"><td class="rid">25</td><td></td><td class="mo"><svg width="17" height="12"><use href="#auto"/></svg></td><td class="n0">9 如果有必要，调整计划</td><td>$100.00</td><td>1 个工作日</td><td>##########</td><td>##########</td><td>2019年3月29日</td><td>2019年3月29日</td><td>NA</td><td>NA</td><td>0%</td></tr>
      </tbody>
    </table>
  </div>
  <div class="split"></div>
  <div class="ganttp">
    <svg width="765" height="752" viewBox="1139 249 765 752">
      <rect x="1139" y="249" width="765" height="38" fill="#e4e4e4"/>
      <path d="M1139 286.500h765" stroke="#a9a9a9"/>
      <path d="M1139 308.500h765" stroke="#8a8a8a"/>
      <path d="M1308 250v14M1484 250v14M1666 250v14M1841 250v14" stroke="#c4c4c4"/>
      <path d="M1179.700 272v15M1220.700 272v15M1261.600 272v15M1302.600 272v15M1343.500 272v15M1384.500 272v15M1425.400 272v15M1466.400 272v15M1507.300 272v15M1548.300 272v15M1589.200 272v15M1630.200 272v15M1671.100 272v15M1712.100 272v15M1753 272v15M1794 272v15M1834.900 272v15M1875.900 272v15" stroke="#c4c4c4"/>
      <text class="gm" x="1132.500" y="263">2019年3月</text><text class="gm" x="1313" y="263">2019年4月</text><text class="gm" x="1489" y="263">2019年5月</text><text class="gm" x="1671.500" y="263">2019年6月</text><text class="gm" x="1846.500" y="263">2019年7月</text>
      <g><text class="gw" x="1158.300" y="281">3</text><text class="gw" x="1199.300" y="281">10</text><text class="gw" x="1240.200" y="281">17</text><text class="gw" x="1281.200" y="281">24</text><text class="gw" x="1322.100" y="281">31</text><text class="gw" x="1363.100" y="281">7</text><text class="gw" x="1404" y="281">14</text><text class="gw" x="1445" y="281">21</text><text class="gw" x="1485.900" y="281">28</text><text class="gw" x="1526.900" y="281">5</text><text class="gw" x="1567.800" y="281">12</text><text class="gw" x="1608.800" y="281">19</text><text class="gw" x="1649.700" y="281">26</text><text class="gw" x="1690.700" y="281">2</text><text class="gw" x="1731.600" y="281">9</text><text class="gw" x="1772.600" y="281">16</text><text class="gw" x="1813.500" y="281">23</text><text class="gw" x="1854.500" y="281">30</text><text class="gw" x="1895.400" y="281">7</text></g>
      <path d="M1197.500 287v714" stroke="#888" stroke-dasharray="1.500 3"/>
      <path d="M1360.500 287v714" stroke="#8dc07d"/>
      <!-- bars -->
      <g fill="#8ab9ec">
        <rect x="1197.500" y="333" width="6.500" height="11"/><rect x="1204.200" y="369" width="28.600" height="11"/><rect x="1232.800" y="405" width="47.400" height="11"/><rect x="1280.200" y="441" width="6.600" height="11"/><rect x="1285.800" y="494" width="6.600" height="11"/>
        <rect x="1292" y="587" width="40.800" height="11"/><rect x="1332.800" y="608" width="41.200" height="11"/><rect x="1332.800" y="629" width="35.200" height="11"/><rect x="1335" y="650" width="23" height="11"/><rect x="1333" y="686" width="29" height="11"/><rect x="1357" y="722" width="6" height="11"/><rect x="1374" y="758" width="6" height="11"/>
        <rect x="1391" y="815" width="153" height="11"/><rect x="1555.200" y="836" width="234.800" height="11"/><rect x="1801" y="857" width="103" height="11"/><rect x="1292" y="935" width="491.800" height="11"/><rect x="1292" y="971" width="491.800" height="11"/><rect x="1292" y="992" width="6.600" height="11"/>
      </g>
      <rect x="1197.500" y="337.500" width="6.500" height="2.500" fill="#3a7fd0"/>
      <rect x="1204.200" y="373" width="28.600" height="3" fill="#3a7fd0"/>
      <!-- summary bars -->
      <g fill="#555">
        <rect x="1200" y="312" width="91.400" height="2.500"/><rect x="1291.400" y="552" width="88.600" height="2.500"/><rect x="1291.400" y="552" width="2.500" height="10"/><rect x="1377.500" y="552" width="2.500" height="10"/><rect x="1390" y="794" width="514" height="2.500"/><rect x="1389.300" y="794" width="2.500" height="11"/>
        <use href="#dm" x="1197.500" y="297"/><use href="#dm" x="1291.400" y="318"/><use href="#dm" x="1291.400" y="535"/><use href="#dm" x="1291.400" y="883.700"/><use href="#dm" x="1291.400" y="904.700"/>
      </g>
      <rect x="1197" y="312" width="3" height="12" fill="#fff" stroke="#888"/>
      <!-- links -->
      <path d="M1201.600 297v33M1295.500 540v452" fill="none" stroke="#222"/>
      <g fill="#222"><use href="#ah" x="1201.600" y="306"/><use href="#ah" x="1201.600" y="328"/><use href="#ah" x="1295.500" y="546"/><use href="#ah" x="1295.500" y="582"/><use href="#ah" x="1295.500" y="874"/><use href="#ah" x="1295.500" y="895"/><use href="#ah" x="1295.500" y="930"/><use href="#ah" x="1295.500" y="966"/><use href="#ah" x="1295.500" y="987"/></g>
      <path d="M1204 339h3.200v26M1232.800 375h3.500v26M1280.200 411h3.100v26M1286.800 447h2.600v43M1292.400 500h3.100v27M1332.800 593h3.500v94M1358 656h2v67M1374 614h3.700v141M1368 635h5.600v120M1380 764h6.800v25M1380 767h10v44M1544 821h10v13M1790 842h10v13" fill="none" stroke="#2a7ad5"/>
      <g fill="#2a7ad5"><use href="#ah" x="1207.200" y="364"/><use href="#ah" x="1236.300" y="400"/><use href="#ah" x="1283.300" y="436"/><use href="#ah" x="1289.400" y="489"/><use href="#ah" x="1295.500" y="526"/><use href="#ah" x="1336.300" y="603"/><use href="#ah" x="1336.300" y="624"/><use href="#ah" x="1336.300" y="645"/><use href="#ah" x="1336.300" y="681"/><use href="#ah" x="1360" y="717"/><use href="#ah" x="1373.600" y="753"/><use href="#ah" x="1377.700" y="753"/><use href="#ah" x="1386.800" y="789"/><use href="#ah" x="1390" y="810"/><use href="#ah" x="1554.200" y="831"/><use href="#ah" x="1800" y="852"/></g>
      <!-- labels -->
      <g class="gb-t" transform="translate(0 -1)">
        <text class="gd" x="1210" y="302">3/13</text><text class="gd" x="1303.700" y="323">3/28</text>
        <text class="gd" x="1162" y="344">3/13</text><text x="1210.300" y="344">凯西[50%], 玛丽[50%], 约翰</text>
        <text class="gd" x="1168" y="380">3/14</text><text x="1239.400" y="380">凯西</text>
        <text class="gd" x="1197.500" y="416">3/19</text><text x="1286.300" y="416">凯西[50%], 约翰</text>
        <text class="gd" x="1244" y="452">3/27</text><text x="1292.400" y="452">凯西[50%], 约翰, 玛丽[50%]</text>
        <text class="gd" x="1249.600" y="505">3/28</text><text x="1298.600" y="505">凯西</text>
        <text class="gd" x="1303.700" y="540">3/28</text>
        <text class="gd" x="1255.700" y="598">3/29</text><text x="1339.400" y="598">凯西[25%], 克里斯[25%], 玛丽[25%], 约翰</text>
        <text class="gd" x="1304.200" y="619">4/5</text><text x="1380.700" y="619">凯西[25%], 约翰, 玛丽[25%]</text>
        <text class="gd" x="1304.200" y="640">4/5</text><text x="1375" y="640">凯西[10%]</text>
        <text class="gd" x="1304.200" y="661">4/5</text><text x="1362" y="661">凯西[10%]</text>
        <text class="gd" x="1304.200" y="697">4/5</text><text x="1366" y="697">克里斯[50%]</text>
        <text class="gd" x="1326" y="732">4/9</text><text x="1368" y="732">凯西[25%]</text>
        <text class="gd" x="1337.900" y="769">4/12</text><text x="1386.300" y="769">凯西[25%], 克里斯[25%], 玛丽[25%], 约翰</text>
        <text class="gd" x="1355.200" y="826">4/15</text><text x="1551" y="826">约翰</text>
        <text class="gd" x="1518.500" y="847">5/13</text><text x="1797" y="847">玛丽[75%]</text>
        <text class="gd" x="1764.400" y="868">6/24</text>
        <text class="gd" x="1303.700" y="889">3/28</text><text class="gd" x="1303.700" y="910">3/28</text>
        <text class="gd" x="1255.700" y="946">3/29</text><text x="1790.400" y="946">克里斯[5%]</text>
        <text class="gd" x="1255.700" y="982">3/29</text><text x="1790.400" y="982">凯西[5%]</text>
        <text class="gd" x="1255.700" y="1003">3/29</text><text x="1304.700" y="1003">凯西[25%]</text>
      </g>
    </svg>
  </div>
  <div class="vsb d-flex">
    <div class="sb-btn"><i class="up"></i></div>
    <div class="vth"></div>
    <div class="flex-grow-1"></div>
    <div class="sb-btn"><i class="dn"></i></div>
  </div>
</main>

<div class="hsb d-flex">
  <div class="hs-l"></div>
  <div class="hs-btn"><i class="lf"></i></div>
  <div class="hs-th t1"></div>
  <div class="hs-sp s1"></div>
  <div class="hs-btn"><i class="rt"></i></div>
  <div class="hs-sp s3"></div>
  <div class="hs-btn"><i class="lf"></i></div>
  <div class="hs-th t2"></div>
  <div class="hs-sp s2"></div>
  <div class="hs-btn"><i class="rt"></i></div>
</div>

<footer class="stb d-flex flex-none">
  <div class="stb-a">就绪</div>
  <div class="stb-b d-flex">
    <svg width="14" height="15" viewBox="0 0 17 12"><use href="#auto"/></svg><span>新任务: 自动计划</span>
  </div>
  <div class="stb-r d-flex">
    <div class="vb-on"><svg width="14" height="19" viewBox="0 0 14 19"><rect x=".5" y=".5" width="13" height="18" fill="none" stroke="#666"/><path d="M3 4h5M5 8h5M7 12h5" stroke="#666" stroke-width="1.600"/></svg></div>
    <div class="vb"><svg width="14" height="19" viewBox="0 0 14 19"><rect x=".5" y=".5" width="13" height="18" fill="#fff" stroke="#666"/><rect width="14" height="5" fill="#666"/><path d="M5 5v14M9 5v14M0 9h14M0 13h14" stroke="#666"/></svg></div>
    <div class="vb"><svg width="14" height="19" viewBox="0 0 14 19"><rect x=".5" y=".5" width="13" height="18" fill="#fff" stroke="#666"/><rect x="7" width="7" height="6" fill="#666"/><path d="M5 0v19M0 6h14M0 12h14M9 6v13" stroke="#666"/></svg></div>
    <div class="vb"><svg width="14" height="19" viewBox="0 0 14 19"><rect x=".5" y=".5" width="13" height="18" fill="#fff" stroke="#666"/><path d="M5 0v19M9 0v19M0 6h14M0 12h14" stroke="#666"/></svg></div>
    <div class="vb"><svg width="14" height="19" viewBox="0 0 14 19"><path d="M3 1h8v17H3" fill="none" stroke="#666"/><rect x="2" y="5" width="3" height="3" fill="#666"/><rect x="2" y="12" width="3" height="3" fill="#666"/></svg></div>
    <svg class="ms-2" width="118" height="14" viewBox="0 0 118 14"><path d="M0 7h7" stroke="#666" stroke-width="2"/><path d="M14 7h95" stroke="#aaa"/><rect x="68" y="0" width="3" height="14" fill="#555"/><path d="M111 7h7M114.500 3.500v7" stroke="#666" stroke-width="1.500"/></svg>
  </div>
  <div class="wm">https://blog.csdn.net/Clown_pan</div>
</footer>

<div class="tbar d-flex flex-none">
  <div class="orb"></div>
  <div class="tb-g d-flex">
    <div class="tbtn"></div><div class="tbtn"></div><div class="tbtn"></div><div class="tbtn"></div>
  </div>
  <div class="clk">14:47</div>
</div>

<div class="dropdown-menu show vmenu">
  <a class="dropdown-item chk" href="#"><svg width="13" height="11" viewBox="0 0 13 11"><path d="M2 6l3 3 6-8" fill="none" stroke="#777" stroke-width="1.800"/></svg>甘特图(<u>G</u>)</a>
  <a class="dropdown-item" href="#">跟踪甘特图(<u>N</u>)</a>
  <a class="dropdown-item" href="#">任务窗体</a>
  <a class="dropdown-item" href="#">任务分配状况(<u>K</u>)</a>
  <a class="dropdown-item" href="#">任务工作表</a>
  <a class="dropdown-item" href="#">日程表(<u>L</u>)</a>
  <a class="dropdown-item" href="#">日历(<u>C</u>)</a>
  <a class="dropdown-item" href="#">网络图(<u>D</u>)</a>
  <div class="dropdown-divider"></div>
  <a class="dropdown-item" href="#">工作组规划器(<u>P</u>)</a>
  <a class="dropdown-item" href="#">资源窗体</a>
  <a class="dropdown-item" href="#">资源工作表(<u>S</u>)</a>
  <a class="dropdown-item" href="#">资源使用状况(<u>U</u>)</a>
  <a class="dropdown-item" href="#">资源图表(<u>A</u>)</a>
  <div class="dropdown-divider"></div>
  <a class="dropdown-item" href="#">其他视图(<u>M</u>)...</a>
  <a class="dropdown-item hot" href="#">视图栏(<u>V</u>)</a>
</div>
<svg class="ring" width="165" height="102" viewBox="0 645 165 102"><ellipse cx="82" cy="695.500" rx="77.500" ry="46.500" fill="none" stroke="#e6393c" stroke-width="2.500" transform="rotate(2 82 695)"/></svg>

<script src="https://cdn.jsdelivr.net/npm/bootstrap@5.3.0/dist/js/bootstrap.bundle.min.js"></script>
</body>
</html>
